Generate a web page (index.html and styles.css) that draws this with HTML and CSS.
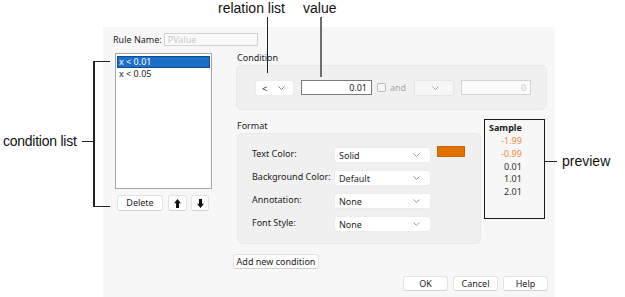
FILE: index.html
```html
<!DOCTYPE html>
<html lang="en">
<head>
  <meta charset="UTF-8">
  <title>Conditional Format Rule</title>
  <link rel="stylesheet" href="styles.css">
</head>
<body>
  <div class="screen">
    <div class="dialog">
      <div class="rule-row">
        <span class="rule-label">Rule Name:</span>
        <div class="field field-disabled rule-input">PValue</div>
      </div>

      <div class="main">
        <div class="left-col">
          <div class="listbox">
            <div class="item selected">x &lt; 0.01</div>
            <div class="item">x &lt; 0.05</div>
          </div>
          <div class="list-buttons">
            <button class="btn btn-delete">Delete</button>
            <button class="btn btn-icon btn-up">
              <svg width="7" height="9" viewBox="0 0 7 9"><path d="M3.5 0 L7 4.2 H5 V9 H2 V4.2 H0 Z" fill="#111"/></svg>
            </button>
            <button class="btn btn-icon btn-down">
              <svg width="7" height="9" viewBox="0 0 7 9"><path d="M3.5 9 L7 4.8 H5 V0 H2 V4.8 H0 Z" fill="#111"/></svg>
            </button>
          </div>
        </div>

        <div class="right-col">
          <div class="group-title">Condition</div>
          <div class="group condition-box">
            <div class="select select-rel">
              <span>&lt;</span>
              <svg class="chev" width="7" height="4" viewBox="0 0 7 4"><path d="M0.5 0.5 L3.5 3.5 L6.5 0.5" fill="none" stroke="#888" stroke-width="1"/></svg>
            </div>
            <div class="field value-input">0.01</div>
            <span class="checkbox"></span>
            <span class="and-label">and</span>
            <div class="select select-rel2">
              <svg class="chev" width="7" height="4" viewBox="0 0 7 4"><path d="M0.5 0.5 L3.5 3.5 L6.5 0.5" fill="none" stroke="#aaa" stroke-width="1"/></svg>
            </div>
            <div class="field field-disabled value-input2">0</div>
          </div>

          <div class="format-row">
            <div class="format">
              <div class="group-title">Format</div>
              <div class="group format-box">
                <div class="format-line">
                  <span class="format-label">Text Color:</span>
                  <div class="select select-wide">
                    <span>Solid</span>
                    <svg class="chev" width="7" height="4" viewBox="0 0 7 4"><path d="M0.5 0.5 L3.5 3.5 L6.5 0.5" fill="none" stroke="#999" stroke-width="1"/></svg>
                  </div>
                  <span class="swatch"></span>
                </div>
                <div class="format-line">
                  <span class="format-label">Background Color:</span>
                  <div class="select select-wide">
                    <span>Default</span>
                    <svg class="chev" width="7" height="4" viewBox="0 0 7 4"><path d="M0.5 0.5 L3.5 3.5 L6.5 0.5" fill="none" stroke="#999" stroke-width="1"/></svg>
                  </div>
                </div>
                <div class="format-line">
                  <span class="format-label">Annotation:</span>
                  <div class="select select-wide">
                    <span>None</span>
                    <svg class="chev" width="7" height="4" viewBox="0 0 7 4"><path d="M0.5 0.5 L3.5 3.5 L6.5 0.5" fill="none" stroke="#999" stroke-width="1"/></svg>
                  </div>
                </div>
                <div class="format-line">
                  <span class="format-label">Font Style:</span>
                  <div class="select select-wide">
                    <span>None</span>
                    <svg class="chev" width="7" height="4" viewBox="0 0 7 4"><path d="M0.5 0.5 L3.5 3.5 L6.5 0.5" fill="none" stroke="#999" stroke-width="1"/></svg>
                  </div>
                </div>
              </div>
            </div>

            <div class="sample">
              <div class="sample-col">
                <div class="sample-title">Sample</div>
                <div class="sample-val neg">-1.99</div>
                <div class="sample-val neg">-0.99</div>
                <div class="sample-val">0.01</div>
                <div class="sample-val">1.01</div>
                <div class="sample-val">2.01</div>
              </div>
            </div>
          </div>

          <button class="btn btn-add">Add new condition</button>
        </div>
      </div>

      <div class="dialog-buttons">
        <button class="btn btn-dlg">OK</button>
        <button class="btn btn-dlg">Cancel</button>
        <button class="btn btn-dlg">Help</button>
      </div>
    </div>

    <!-- callouts -->
    <span class="callout callout-relation">relation list</span>
    <span class="callout-line line-relation"></span>
    <span class="callout callout-value">value</span>
    <span class="callout-line line-value"></span>
    <span class="callout callout-condlist">condition list</span>
    <span class="bracket"></span>
    <span class="callout-line line-condlist"></span>
    <span class="callout callout-preview">preview</span>
    <span class="callout-line line-preview"></span>
  </div>
</body>
</html>
```

FILE: styles.css
```css
body, html {
  margin: 0;
  padding: 0;
  background: #fff;
}

.screen {
  position: relative;
  width: 625px;
  height: 297px;
  overflow: hidden;
  font-family: "Noto Sans", sans-serif;
  font-size: 9px;
  color: #1e1e1e;
}

.dialog {
  box-sizing: border-box;
  margin-left: 103px;
  padding: 6px 8px 0 12px;
  position: relative;
  top: 27px;
  width: 452px;
  height: 270px;
  background-color: #f7f7f7;
}

.rule-row {
  display: flex;
  align-items: center;
  height: 13px;
  margin-left: -2px;
}

.rule-label {
  color: #222;
}

.field {
  box-sizing: border-box;
  background: #fff;
  border: 1px solid #7a7a7a;
  line-height: 13px;
  padding: 0 3px;
}

.field-disabled {
  background: #fafafa;
  border-color: #d2d2d2;
  color: #c8c8c8;
}

.rule-input {
  margin-left: 2px;
  width: 94px;
  height: 13px;
  line-height: 11px;
}

.main {
  display: flex;
  margin-top: 7px;
}

.left-col {
  width: 97px;
}

.listbox {
  box-sizing: border-box;
  height: 136px;
  background: #fff;
  border: 1px solid #a5a5a5;
  padding: 2px 0 0;
}

.item {
  height: 12px;
  line-height: 12px;
  padding-left: 2px;
  margin: 0 1px;
  color: #222;
}

.item.selected {
  background-color: #1b6fc8;
  box-shadow: inset 0 0 0 1px #0e4b8f;
  color: #fff;
}

.list-buttons {
  display: flex;
  margin-top: 6px;
}

.btn {
  box-sizing: border-box;
  background: #fff;
  border: 1px solid #e3e3e3;
  border-bottom-color: #d2d2d2;
  border-radius: 3px;
  font-family: "Noto Sans", sans-serif;
  font-size: 9px;
  color: #1e1e1e;
  padding: 0;
  height: 16px;
  line-height: 14px;
  cursor: pointer;
}

.btn-delete {
  width: 46px;
  margin-left: 2px;
}

.btn-icon {
  display: flex;
  align-items: center;
  justify-content: center;
}

.btn-up {
  width: 19px;
  margin-left: 5px;
}

.btn-down {
  width: 18px;
  margin-left: 4px;
}

.right-col {
  width: 311px;
  margin-left: 24px;
  margin-top: -1px;
}

.group-title {
  height: 12px;
  line-height: 12px;
  padding-left: 1px;
  color: #222;
}

.group {
  box-sizing: border-box;
  margin-top: 1px;
  background: #f0f0f0;
  border: 1px solid #e9e9e9;
  border-radius: 5px;
}

.condition-box {
  display: flex;
  align-items: flex-start;
  height: 45px;
  padding: 14px 0 0 18px;
}

.select {
  box-sizing: border-box;
  display: flex;
  align-items: center;
  justify-content: space-between;
  height: 16px;
  background: #fff;
  border: 1px solid #ececec;
  border-radius: 3px;
  padding: 0 5px 0 4px;
}

.select .chev {
  flex: none;
}

.select-rel {
  width: 39px;
  padding-left: 6px;
  padding-right: 8px;
}

.value-input {
  width: 71px;
  height: 15px;
  margin-left: 7px;
  text-align: right;
  padding-right: 4px;
}

.checkbox {
  box-sizing: border-box;
  width: 9px;
  height: 9px;
  margin: 3px 0 0 5px;
  border: 1px solid #b9b9b9;
  border-radius: 2px;
  background: #f7f7f7;
}

.and-label {
  margin-left: 4px;
  line-height: 15px;
  color: #aaa;
}

.select-rel2 {
  width: 40px;
  margin-left: 8px;
  justify-content: flex-end;
  padding-right: 14px;
  background: #f6f6f6;
  border-color: #e4e4e4;
}

.value-input2 {
  width: 70px;
  height: 15px;
  margin-left: 7px;
  text-align: right;
  padding-right: 4px;
}

.format-row {
  display: flex;
  align-items: flex-start;
  margin-top: 9px;
}

.format {
  width: 244px;
  margin-left: 1px;
}

.format .group-title {
  margin-top: 1px;
  padding-left: 0;
}

.format-box {
  height: 111px;
  padding: 13px 0 0 14px;
  display: flex;
  flex-direction: column;
  gap: 7px;
}

.format-line {
  display: flex;
  align-items: flex-start;
  height: 16px;
}

.format-label {
  width: 82px;
  line-height: 13px;
  color: #222;
}

.select-wide {
  width: 97px;
  padding-right: 10px;
}

.swatch {
  width: 28px;
  height: 11px;
  margin: -1px 0 0 6px;
  background: #e37100;
  box-shadow: inset 0 0 0 1px #c96400;
}

.sample {
  box-sizing: border-box;
  width: 61px;
  height: 100px;
  margin-left: 3px;
  border: 1px solid #1a1a1a;
  background: #f7f7f7;
  padding: 1px 0 0 4px;
}

.sample-col {
  display: inline-flex;
  flex-direction: column;
  align-items: flex-end;
}

.sample-title {
  font-weight: bold;
  line-height: 13px;
  margin-bottom: 1px;
  color: #1a1a1a;
}

.sample-val {
  line-height: 12.75px;
  color: #333;
}

.sample-val.neg {
  color: #f0883b;
}

.btn-add {
  display: block;
  width: 86px;
  height: 15px;
  margin: 10px 0 0 -3px;
  line-height: 13px;
}

.dialog-buttons {
  display: flex;
  justify-content: flex-end;
  gap: 5px;
  margin-top: 7px;
  margin-right: -1px;
}

.btn-dlg {
  width: 45px;
  height: 15px;
  line-height: 13px;
}

/* callouts around the dialog */
.callout {
  position: absolute;
  font-family: "Liberation Sans", Arial, sans-serif;
  font-size: 14px;
  line-height: 16px;
  color: #111;
  white-space: nowrap;
}

.callout-relation {
  left: 218px;
  top: 0;
}

.callout-value {
  left: 303px;
  top: 0;
}

.callout-condlist {
  left: 3px;
  top: 133px;
  letter-spacing: -0.25px;
}

.callout-preview {
  left: 562px;
  top: 153px;
}

.callout-line {
  position: absolute;
  background: #222;
}

.line-relation {
  left: 267px;
  top: 17px;
  width: 1px;
  height: 56px;
}

.line-value {
  left: 320px;
  top: 17px;
  width: 2px;
  height: 60px;
  background: #6e6e6e;
}

.bracket {
  position: absolute;
  box-sizing: border-box;
  left: 93px;
  top: 61px;
  width: 17px;
  height: 146px;
  border: 1px solid #222;
  border-left-width: 2px;
  border-right: none;
}

.line-condlist {
  left: 82px;
  top: 141px;
  width: 11px;
  height: 1px;
}

.line-preview {
  left: 545px;
  top: 161px;
  width: 12px;
  height: 1px;
}
```
